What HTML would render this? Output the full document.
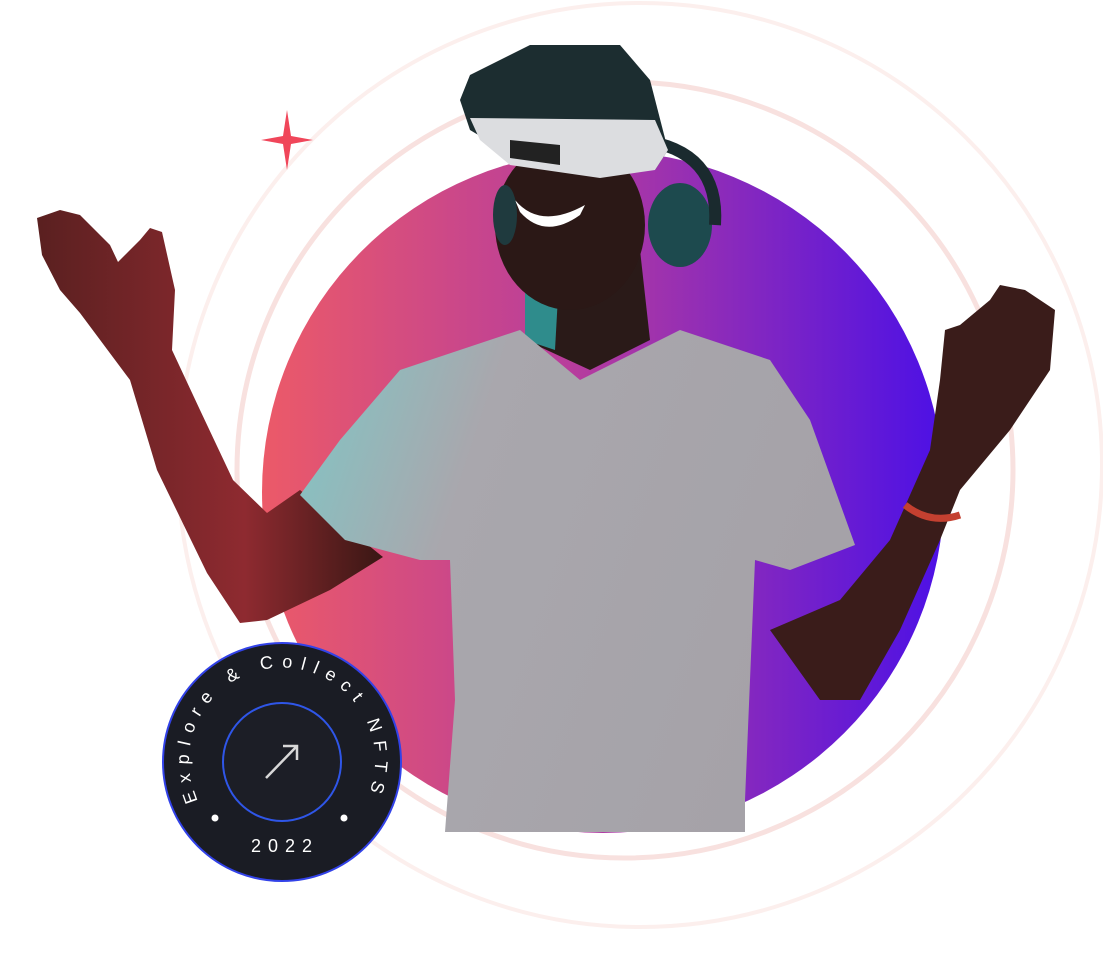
<!DOCTYPE html>
<html><head><meta charset="utf-8"><style>
html,body{margin:0;padding:0;background:#fff;width:1103px;height:971px;overflow:hidden}
svg{display:block}
</style></head><body>
<svg width="1103" height="971" viewBox="0 0 1103 971" xmlns="http://www.w3.org/2000/svg">
<defs>
<linearGradient id="g" x1="0" y1="0" x2="1" y2="0">
<stop offset="0" stop-color="#ec5a68"/><stop offset="0.45" stop-color="#b83d9c"/><stop offset="1" stop-color="#4c10e6"/>
</linearGradient>
<linearGradient id="shirt" x1="0" y1="0" x2="1" y2="0.3">
<stop offset="0" stop-color="#7fc7c6"/><stop offset="0.35" stop-color="#a9a7ad"/><stop offset="1" stop-color="#a5a2a8"/>
</linearGradient>
<linearGradient id="armL" x1="0" y1="0" x2="1" y2="0">
<stop offset="0" stop-color="#5a2020"/><stop offset="0.6" stop-color="#8e2a30"/><stop offset="1" stop-color="#3a1714"/>
</linearGradient>
<clipPath id="c"><rect x="0" y="0" width="1103" height="832"/></clipPath>
<path id="arcT" d="M 202 808 A 93 93 0 1 1 362 808"/>
</defs>
<circle cx="640" cy="465" r="462" fill="none" stroke="#fcefed" stroke-width="4"/>
<circle cx="625" cy="470" r="388" fill="none" stroke="#f8e1df" stroke-width="5"/>
<circle cx="603" cy="492" r="341" fill="url(#g)"/>
<path d="M287 110 L291 136 L313 140 L291 144 L287 170 L283 144 L261 140 L283 136 Z" fill="#f0465a"/>
<g clip-path="url(#c)">
<path d="M37 218 L60 210 L80 215 L110 245 L118 262 L140 240 L150 228 L162 232 L175 290 L172 350 L200 410 L233 480 L267 513 L300 490 L383 557 L330 590 L267 620 L240 623 L207 573 L157 470 L130 380 L80 313 L60 290 L42 255 Z" fill="url(#armL)"/>
<path d="M945 330 L960 325 L990 300 L1000 285 L1025 290 L1040 300 L1055 310 L1050 370 L1010 430 L960 490 L940 540 L900 630 L860 700 L820 700 L770 630 L840 600 L890 540 L930 450 L940 380 Z" fill="#3a1c1a"/>
<path d="M905 505 Q930 525 960 515" stroke="#c44030" stroke-width="7" fill="none"/>
<path d="M525 250 L640 250 L650 340 L590 370 L525 340 Z" fill="#2a1a18"/>
<path d="M525 250 L560 260 L555 350 L525 340 Z" fill="#2f8c8c"/>
<path d="M520 330 L580 380 L680 330 L770 360 L810 420 L855 545 L790 570 L755 560 L745 800 L745 832 L445 832 L455 700 L450 560 L420 560 L345 540 L300 495 L340 440 L400 370 Z" fill="url(#shirt)"/>
<ellipse cx="570" cy="225" rx="75" ry="85" fill="#2b1816"/>
<path d="M515 200 Q540 230 585 205 L580 215 Q545 240 520 212 Z" fill="#fff"/>
<ellipse cx="680" cy="225" rx="32" ry="42" fill="#1d4a4e"/>
<path d="M640 140 Q720 150 715 225" stroke="#1a2a2e" stroke-width="12" fill="none"/>
<ellipse cx="505" cy="215" rx="12" ry="30" fill="#1f3a3e"/>
<path d="M470 75 L530 45 L620 45 L650 80 L668 150 L655 170 L520 160 L470 130 L460 100 Z" fill="#1c2d30"/>
<path d="M470 118 L655 120 L668 150 L655 170 L600 178 L510 165 L480 140 Z" fill="#dcdde0"/>
<path d="M510 140 L560 145 L560 165 L510 158 Z" fill="#222"/>
</g>
<circle cx="282" cy="762" r="119" fill="#1a1c24" stroke="#3242e8" stroke-width="2"/>
<circle cx="282" cy="762" r="59" fill="#1c1e26" stroke="#2f56e8" stroke-width="2"/>
<path d="M266 778 L297 746 M283 746 L297 746 L297 760" stroke="#d8d8d8" stroke-width="2.5" fill="none"/>
<text font-family="Liberation Sans, sans-serif" font-size="18" fill="#fff" letter-spacing="8.3"><textPath href="#arcT" startOffset="8">Explore &amp; Collect NFTS</textPath></text>
<circle cx="215" cy="818" r="3.5" fill="#fff"/><circle cx="344" cy="818" r="3.5" fill="#fff"/>
<text x="285" y="852" text-anchor="middle" font-family="Liberation Sans, sans-serif" font-size="18" fill="#fff" letter-spacing="7">2022</text>
</svg>
</body></html>
